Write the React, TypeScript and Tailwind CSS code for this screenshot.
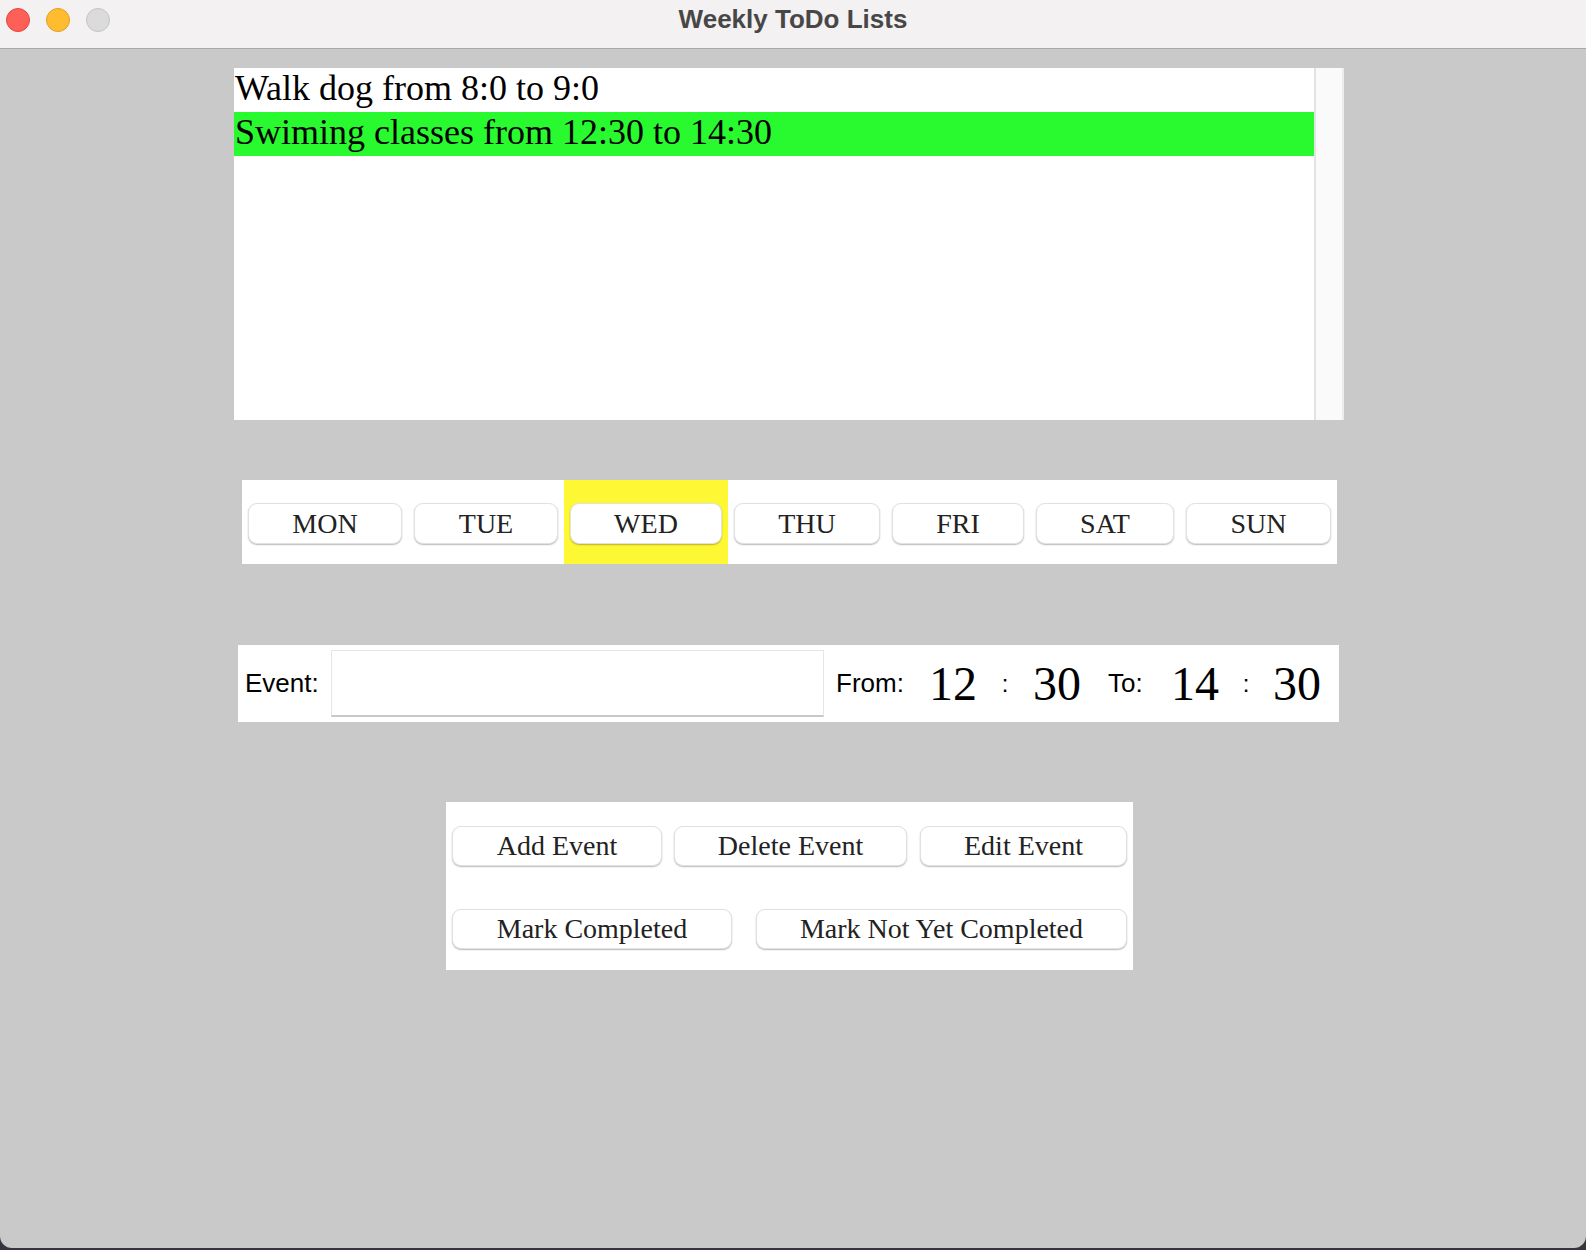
import React from 'react';

const serif = { fontFamily: '"Liberation Serif", "Times New Roman", serif' };
const sans = { fontFamily: '"Liberation Sans", Arial, sans-serif' };

const days = [
  { label: 'MON', w: 'w-[154px]' },
  { label: 'TUE', w: 'w-[144px]' },
  { label: 'WED', w: 'w-[152px]' },
  { label: 'THU', w: 'w-[146px]' },
  { label: 'FRI', w: 'w-[132px]' },
  { label: 'SAT', w: 'w-[138px]' },
  { label: 'SUN', w: 'w-[145px]' },
];

function FxButton({ children, className }: { children: React.ReactNode; className: string }) {
  return (
    <button
      type="button"
      style={serif}
      className={
        'h-[41px] shrink-0 rounded-[9px] bg-white border border-[#e1e1e1] shadow-[0_1px_1.5px_rgba(0,0,0,0.28)] text-[28px] leading-none text-[#222] flex items-center justify-center ' +
        className
      }
    >
      {children}
    </button>
  );
}

export default function App() {
  const events = [
    { text: 'Walk dog from 8:0 to 9:0', done: false },
    { text: 'Swiming classes from 12:30 to 14:30', done: true },
  ];

  return (
    <div className="w-[1586px] h-[1250px] bg-[#3a323c] overflow-hidden">
      <div className="w-full h-[1248px] bg-[#c9c9c9] rounded-b-[12px] overflow-hidden flex flex-col">
        {/* title bar */}
        <div className="relative h-[49px] shrink-0 bg-[#f3f1f2] border-b border-[#a9a9a9] flex items-center justify-center">
          <div className="absolute left-[6px] top-[8px] flex gap-[16px]">
            <span className="w-[24px] h-[24px] rounded-full bg-[#fe5f57] border border-[#e2463f]" />
            <span className="w-[24px] h-[24px] rounded-full bg-[#febc2e] border border-[#dfa123]" />
            <span className="w-[24px] h-[24px] rounded-full bg-[#dcdbdc] border border-[#c5c4c5]" />
          </div>
          <span style={sans} className="text-[26px] font-bold text-[#474747] -mt-[10px]">
            Weekly ToDo Lists
          </span>
        </div>

        {/* event list */}
        <div className="ml-[234px] mt-[19px] w-[1110px] h-[352px] bg-white flex shrink-0">
          <div className="flex-1 flex flex-col">
            {events.map((e, i) => (
              <div
                key={i}
                style={serif}
                className={
                  'h-[44px] pl-[1px] text-[36px] leading-[40px] text-black whitespace-nowrap ' +
                  (e.done ? 'bg-[#29f92f]' : '')
                }
              >
                {e.text}
              </div>
            ))}
          </div>
          <div className="w-[30px] h-full bg-[#fafafa] border-l-2 border-r-2 border-l-[#e3e3e3] border-r-[#ececec]" />
        </div>

        {/* day selector */}
        <div className="ml-[242px] mt-[60px] w-[1095px] h-[84px] bg-white flex shrink-0">
          {days.map(d => (
            <div
              key={d.label}
              className={'h-full px-[6px] pt-[23px] ' + (d.label === 'WED' ? 'bg-[#fef734]' : '')}
            >
              <FxButton className={d.w}>{d.label}</FxButton>
            </div>
          ))}
        </div>

        {/* event form */}
        <div className="ml-[238px] mt-[81px] w-[1101px] h-[77px] bg-white flex items-center shrink-0 text-black">
          <span style={sans} className="pl-[7px] w-[93px] text-[26px]">
            Event:
          </span>
          <input
            type="text"
            className="w-[493px] h-[67px] bg-white border border-[#e6e6e6] border-b-2 border-b-[#c8c8c8] outline-none px-2"
          />
          <span style={sans} className="ml-[12px] w-[93px] text-[26px]">
            From:
          </span>
          <span style={serif} className="w-[48px] text-[48px] leading-none">12</span>
          <span style={sans} className="w-[56px] text-center text-[24px]">:</span>
          <span style={serif} className="w-[48px] text-[48px] leading-none">30</span>
          <span style={sans} className="ml-[27px] w-[63px] text-[26px]">
            To:
          </span>
          <span style={serif} className="w-[48px] text-[48px] leading-none">14</span>
          <span style={sans} className="w-[54px] text-center text-[24px]">:</span>
          <span style={serif} className="w-[48px] text-[48px] leading-none">30</span>
        </div>

        {/* actions */}
        <div className="ml-[446px] mt-[80px] w-[687px] h-[168px] bg-white pl-[6px] pt-[24px] flex flex-col gap-[43px] shrink-0">
          <div className="flex">
            <FxButton className="w-[210px] !h-[40px]">Add Event</FxButton>
            <FxButton className="ml-[12px] w-[233px] !h-[40px]">Delete Event</FxButton>
            <FxButton className="ml-[13px] w-[207px] !h-[40px]">Edit Event</FxButton>
          </div>
          <div className="flex">
            <FxButton className="w-[280px] !h-[40px]">Mark Completed</FxButton>
            <FxButton className="ml-[24px] w-[371px] !h-[40px]">Mark Not Yet Completed</FxButton>
          </div>
        </div>
      </div>
    </div>
  );
}
